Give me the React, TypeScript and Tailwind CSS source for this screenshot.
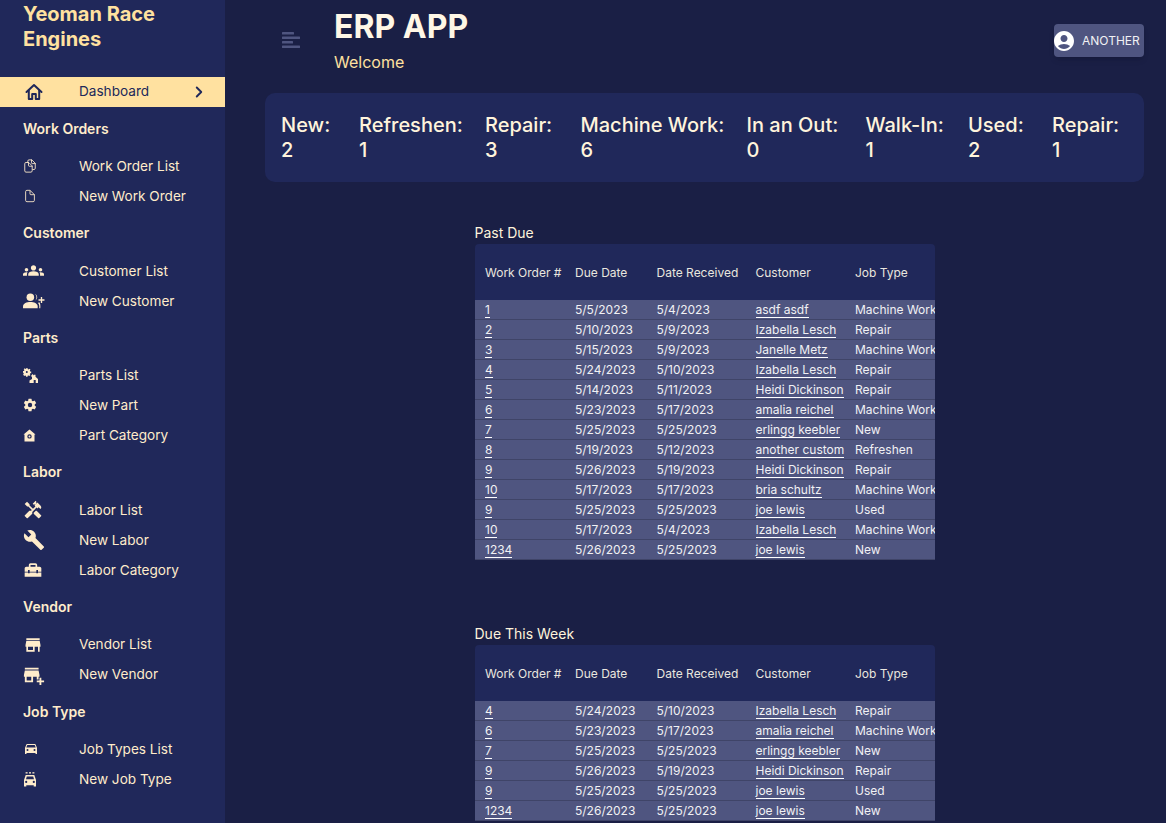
import React from "react";
import { FiChevronRight } from "react-icons/fi";
import { IoDocumentsOutline, IoDocumentOutline, IoSettingsSharp, IoCarSharp } from "react-icons/io5";
import { MdGroups, MdHandyman, MdBuild, MdHomeRepairService, MdStore, MdAddBusiness, MdAccountCircle } from "react-icons/md";

function HomeIcon() {
  return (
    <svg viewBox="0 0 18 18" width="18" height="18" fill="none" stroke="currentColor" strokeWidth="2" strokeLinejoin="round" strokeLinecap="round">
      <path d="M1.500 9 9 2l7.500 7" />
      <path d="M3.800 7.500V16h3.400v-5h3.600v5h3.400V7.500" />
    </svg>
  );
}

function PartsIcon({ size = 15 }: { size?: number }) {
  return (
    <svg viewBox="0 0 15 15" width={size} height={size} fill="currentColor">
      <path fillRule="evenodd" d="M3 0h1.600v1l1 .4.8-.7 1.100 1.100-.7.8.4 1h1v1.600h-1l-.4 1 .7.8-1.100 1.100-.8-.7-1 .4v1H3v-1l-1-.4-.8.7L.1 6.500l.7-.8-.4-1H0V3.100h1l.4-1-.7-.8L1.800.2l.8.7 1-.4zM3.800 3a1 1 0 1 0 0 2 1 1 0 0 0 0-2z" />
      <path d="M9.500 6 11 7.500V6.800h1.500v2L15 11v4h-2.300v-3h-2v3H6.500v-2.500L9 11V9l-1-1z" />
    </svg>
  );
}

function PersonPlusIcon({ size = 22 }: { size?: number }) {
  return (
    <svg viewBox="0 0 21 15" width={size} height={size * 15 / 21} fill="currentColor">
      <circle cx="7" cy="4" r="3.600" />
      <path d="M0 14.500v-1.800C0 10 3.500 8.600 7 8.600s7 1.400 7 4.100v1.800z" />
      <path d="M11.500.6a3.800 3.800 0 0 1 0 6.800 4.800 4.800 0 0 0 0-6.800z" />
      <path d="M15.500 8.800C16.500 10 16.800 11.500 16.500 14.500h-1c.2-2 0-3.800-1.200-5z" />
      <path d="M17 3.800h1.300V6H20.500v1.300H18.300v2.200H17V7.300h-2.200V6H17z" />
    </svg>
  );
}

function PartCategoryIcon({ size = 13 }: { size?: number }) {
  return (
    <svg viewBox="0 0 13 13" width={size} height={size} fill="currentColor">
      <path fillRule="evenodd" d="M6.500.5 12.500 5.500H11.500V12.500H1.500V5.500H.5zM6.500 5.200a2.200 2.200 0 1 0 0 4.400 2.200 2.200 0 0 0 0-4.400z" />
      <circle cx="6.500" cy="7.400" r="1" />
    </svg>
  );
}

function TaxiIcon({ size = 14 }: { size?: number }) {
  return (
    <svg viewBox="0 0 14 15" width={size} height={size * 15 / 14} fill="currentColor">
      <rect x="2.600" y="0" width="2" height="1.600" opacity="0.8" />
      <rect x="6" y="0" width="2" height="1.600" opacity="0.8" />
      <rect x="9.400" y="0" width="2" height="1.600" opacity="0.8" />
      <path fillRule="evenodd" d="M2.700 3h8.600L13 8v6.500h-2.300v-1.300H3.300v1.300H1V8zM3.800 4.400 3 7.300h8l-.8-2.900zM3.200 8.800a1.100 1.100 0 1 0 0 2.200 1.100 1.100 0 0 0 0-2.200zm7.600 0a1.100 1.100 0 1 0 0 2.200 1.100 1.100 0 0 0 0-2.200z" />
    </svg>
  );
}

const sections = [
  { title: "Work Orders", items: [["Work Order List", IoDocumentsOutline, 14], ["New Work Order", IoDocumentOutline, 14]] },
  { title: "Customer", items: [["Customer List", MdGroups, 21], ["New Customer", PersonPlusIcon, 22]] },
  { title: "Parts", items: [["Parts List", PartsIcon, 15], ["New Part", IoSettingsSharp, 14], ["Part Category", PartCategoryIcon, 13]] },
  { title: "Labor", items: [["Labor List", MdHandyman, 20], ["New Labor", MdBuild, 22], ["Labor Category", MdHomeRepairService, 20]] },
  { title: "Vendor", items: [["Vendor List", MdStore, 20], ["New Vendor", MdAddBusiness, 22]] },
  { title: "Job Type", items: [["Job Types List", IoCarSharp, 16], ["New Job Type", TaxiIcon, 14]] },
] as const;

const stats = [["New:", 2], ["Refreshen:", 1], ["Repair:", 3], ["Machine Work:", 6], ["In an Out:", 0], ["Walk-In:", 1], ["Used:", 2], ["Repair:", 1]];

const pastDue = [
  ["1", "5/5/2023", "5/4/2023", "asdf asdf", "Machine Work"],
  ["2", "5/10/2023", "5/9/2023", "Izabella Lesch", "Repair"],
  ["3", "5/15/2023", "5/9/2023", "Janelle Metz", "Machine Work"],
  ["4", "5/24/2023", "5/10/2023", "Izabella Lesch", "Repair"],
  ["5", "5/14/2023", "5/11/2023", "Heidi Dickinson", "Repair"],
  ["6", "5/23/2023", "5/17/2023", "amalia reichel", "Machine Work"],
  ["7", "5/25/2023", "5/25/2023", "erlingg keebler", "New"],
  ["8", "5/19/2023", "5/12/2023", "another custom", "Refreshen"],
  ["9", "5/26/2023", "5/19/2023", "Heidi Dickinson", "Repair"],
  ["10", "5/17/2023", "5/17/2023", "bria schultz", "Machine Work"],
  ["9", "5/25/2023", "5/25/2023", "joe lewis", "Used"],
  ["10", "5/17/2023", "5/4/2023", "Izabella Lesch", "Machine Work"],
  ["1234", "5/26/2023", "5/25/2023", "joe lewis", "New"],
];
const thisWeek = [
  ["4", "5/24/2023", "5/10/2023", "Izabella Lesch", "Repair"],
  ["6", "5/23/2023", "5/17/2023", "amalia reichel", "Machine Work"],
  ["7", "5/25/2023", "5/25/2023", "erlingg keebler", "New"],
  ["9", "5/26/2023", "5/19/2023", "Heidi Dickinson", "Repair"],
  ["9", "5/25/2023", "5/25/2023", "joe lewis", "Used"],
  ["1234", "5/26/2023", "5/25/2023", "joe lewis", "New"],
];

const cols = "grid grid-cols-[90px_81.500px_99px_99.500px_90px]";

function WorkTable({ title, rows }: { title: string; rows: string[][] }) {
  return (
    <section className="w-[460px]">
      <h2 className="h-[23px] pt-[2px] text-[14px] leading-[20px] text-[#fff4dc]">{title}</h2>
      <div className="overflow-hidden rounded-t-[4px] bg-[#20285a] text-[12px] text-[#e9e6df]">
        <div className={`${cols} h-[56px] items-center pl-[10.500px] pt-[1px]`}>
          <span>Work Order #</span><span>Due Date</span><span>Date Received</span><span>Customer</span><span>Job Type</span>
        </div>
        {rows.map((r, i) => (
          <div key={i} className={`${cols} h-[20px] items-center border-b border-[#3f4468] bg-[#4f5580] pl-[10.500px] text-[#f1f1f4] whitespace-nowrap`}>
            <a className="w-fit border-b border-white pt-[1px] leading-[14px]">{r[0]}</a>
            <span>{r[1]}</span>
            <span>{r[2]}</span>
            <a className="w-fit border-b border-white pt-[1px] leading-[14px]">{r[3]}</a>
            <span>{r[4]}</span>
          </div>
        ))}
      </div>
    </section>
  );
}

export default function App() {
  return (
    <div className="flex h-screen overflow-hidden bg-[#1a1f45] font-['Inter',sans-serif]">
      <aside className="w-[225px] shrink-0 bg-[#20285a] text-[#ffeccb]">
        <h1 className="h-[77px] px-[23px] pt-[2px] text-[20px] font-[650] leading-[25px] text-[#ffe1a0]">Yeoman Race Engines</h1>
        <div className="flex h-[30px] items-center bg-[#ffe1a0] pl-[25px] text-[13.600px] text-[#20285a]">
          <HomeIcon />
          <span className="mb-[1px] ml-[36px]">Dashboard</span>
          <FiChevronRight size={18} className="ml-[41px]" strokeWidth={2.500} />
        </div>
        <div className="-mt-[0.300px]">
          {sections.map((s) => (
            <div key={s.title}>
              <h3 className="flex h-[44.600px] items-center px-[23px] pb-[0.600px] text-[14px] font-semibold leading-[20px]">{s.title}</h3>
              {s.items.map(([label, Icon, size]) => (
                <div key={label} className="flex h-[30px] items-center text-[13.600px]">
                  <span className="flex w-[79px] pl-[23px]"><Icon size={size} /></span>
                  <span>{label}</span>
                </div>
              ))}
            </div>
          ))}
        </div>
      </aside>
      <main className="min-w-0 flex-1 pl-[40px] pr-[22px]">
        <header className="flex h-[93px] items-start">
          <svg viewBox="0 0 18 16" className="ml-[17px] mt-[31px] h-[18px] w-[18px] text-[#4f5580]" fill="currentColor">
            <rect x="0" y="0" width="12" height="2.400" rx="0.500" />
            <rect x="0" y="4.500" width="18" height="2.400" rx="0.500" />
            <rect x="0" y="9" width="11" height="2.400" rx="0.500" />
            <rect x="0" y="13.500" width="18" height="2.400" rx="0.500" />
          </svg>
          <div className="ml-[34px] pt-[8px]">
            <div className="text-[32px] font-[650] leading-[38px] text-[#fff7e6]">ERP APP</div>
            <div className="mt-[6px] text-[16px] leading-[20px] text-[#ffe1a0]">Welcome</div>
          </div>
          <button className="ml-auto mt-[24px] flex h-[33px] w-[90px] items-center rounded-[4px] bg-[#4f5580] text-[12px] text-[#f1f1f4] shadow-md">
            <MdAccountCircle size={24} className="-ml-[2px] text-white" />
            <span className="ml-[6px]">ANOTHER</span>
          </button>
        </header>
        <div className="grid h-[89px] grid-cols-[78px_126px_95.500px_166px_119px_102.500px_84px_1fr] rounded-[10px] bg-[#20285a] px-[16px] pt-[20px] text-[20px] font-[520] leading-[25px] text-[#fff4dc]">
          {stats.map(([a, b], i) => (
            <div key={i}><div>{a}</div><div>{b}</div></div>
          ))}
        </div>
        <div className="flex flex-col items-center pt-[39px]">
          <WorkTable title="Past Due" rows={pastDue} />
          <div className="h-[62px] shrink-0" />
          <WorkTable title="Due This Week" rows={thisWeek} />
        </div>
      </main>
    </div>
  );
}
